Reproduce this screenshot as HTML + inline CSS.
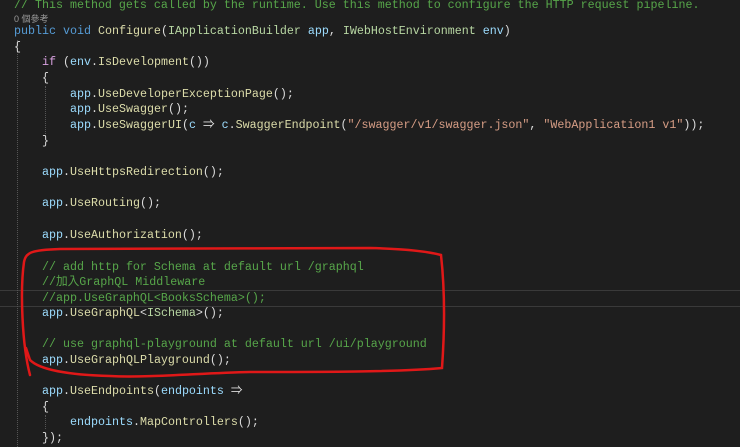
<!DOCTYPE html>
<html><head><meta charset="utf-8"><style>
html,body{margin:0;padding:0;background:#1e1e1e;width:740px;height:447px;overflow:hidden}
.l{position:absolute;white-space:pre;font-family:"Liberation Mono","Noto Sans CJK TC",monospace;font-size:11.67px;line-height:16px;color:#dcdcdc}
.c{color:#57a64a}.k{color:#569cd6}.p{color:#d8a0df}.v{color:#9cdcfe}.m{color:#dcdcaa}.s{color:#d69d85}.t{color:#b8d7a3}
.g{position:absolute;width:0;border-left:1px dotted #555}
</style></head><body>
<div style="position:absolute;left:0;top:290px;width:740px;height:15px;border-top:1px solid #3a3a3a;border-bottom:1px solid #3a3a3a"></div>
<div class="g" style="left:17px;top:40px;height:407px"></div>
<div class="g" style="left:45px;top:86px;height:50px"></div>
<div class="g" style="left:45px;top:415px;height:14px"></div>
<div class="l c" style="left:14px;top:-3px">// This method gets called by the runtime. Use this method to configure the HTTP request pipeline.</div>
<div class="l" style="left:14px;top:11px;font-size:9px;color:#999;font-family:'Liberation Sans','Noto Sans CJK TC',sans-serif">0 個參考</div>
<div class="l" style="left:14px;top:23px"><span class="k">public</span> <span class="k">void</span> <span class="m">Configure</span>(<span class="t">IApplicationBuilder</span> <span class="v">app</span>, <span class="t">IWebHostEnvironment</span> <span class="v">env</span>)</div>
<div class="l" style="left:14px;top:39px">{</div>
<div class="l" style="left:42px;top:54px"><span class="p">if</span> (<span class="v">env</span>.<span class="m">IsDevelopment</span>())</div>
<div class="l" style="left:42px;top:70px">{</div>
<div class="l" style="left:70px;top:86px"><span class="v">app</span>.<span class="m">UseDeveloperExceptionPage</span>();</div>
<div class="l" style="left:70px;top:101px"><span class="v">app</span>.<span class="m">UseSwagger</span>();</div>
<div class="l" style="left:70px;top:117px"><span class="v">app</span>.<span class="m">UseSwaggerUI</span>(<span class="v">c</span> ⇒ <span class="v">c</span>.<span class="m">SwaggerEndpoint</span>(<span class="s">"/swagger/v1/swagger.json"</span>, <span class="s">"WebApplication1 v1"</span>));</div>
<div class="l" style="left:42px;top:133px">}</div>
<div class="l" style="left:42px;top:164px"><span class="v">app</span>.<span class="m">UseHttpsRedirection</span>();</div>
<div class="l" style="left:42px;top:195px"><span class="v">app</span>.<span class="m">UseRouting</span>();</div>
<div class="l" style="left:42px;top:227px"><span class="v">app</span>.<span class="m">UseAuthorization</span>();</div>
<div class="l c" style="left:42px;top:259px">// add http for Schema at default url /graphql</div>
<div class="l c" style="left:42px;top:274px">//加入GraphQL Middleware</div>
<div class="l c" style="left:42px;top:290px">//app.UseGraphQL&lt;BooksSchema&gt;();</div>
<div class="l" style="left:42px;top:305px"><span class="v">app</span>.<span class="m">UseGraphQL</span>&lt;<span class="t">ISchema</span>&gt;();</div>
<div class="l c" style="left:42px;top:336px">// use graphql-playground at default url /ui/playground</div>
<div class="l" style="left:42px;top:352px"><span class="v">app</span>.<span class="m">UseGraphQLPlayground</span>();</div>
<div class="l" style="left:42px;top:383px"><span class="v">app</span>.<span class="m">UseEndpoints</span>(<span class="v">endpoints</span> ⇒</div>
<div class="l" style="left:42px;top:399px">{</div>
<div class="l" style="left:70px;top:414px"><span class="v">endpoints</span>.<span class="m">MapControllers</span>();</div>
<div class="l" style="left:42px;top:430px">});</div>
<svg width="740" height="447" style="position:absolute;left:0;top:0" fill="none" stroke="#e01818" stroke-width="2.5" stroke-linecap="round">
<path d="M30 375 C22 345 20 290 24 262 C26 252 32 250 60 249 C150 249 270 248 370 248 C410 249 430 252 441 255 C446 300 444 340 442 368 C400 372 320 372 250 372 C200 373 150 378 110 376 C70 375 40 370 30 360 L26 348"/>
</svg>
</body></html>
